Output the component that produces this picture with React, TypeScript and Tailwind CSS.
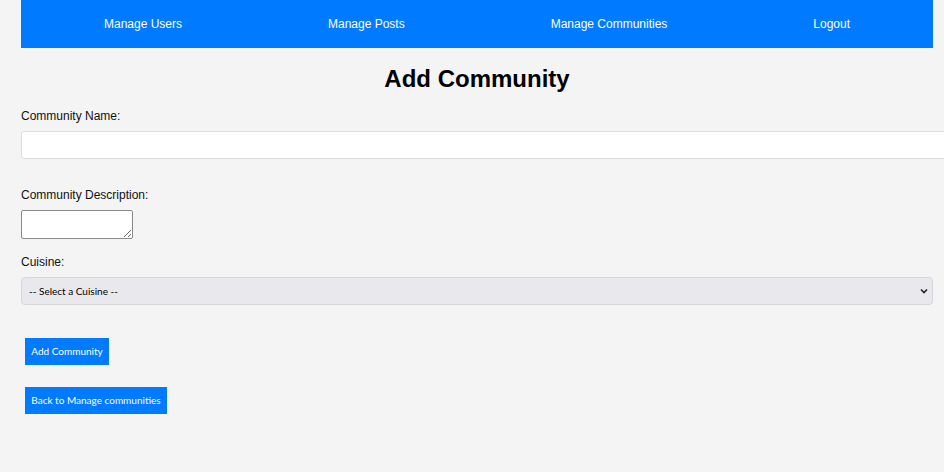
import { useState } from "react";

const navLinks = ["Manage Users", "Manage Posts", "Manage Communities", "Logout"];

export default function App() {
  const [name, setName] = useState("");
  const [description, setDescription] = useState("");
  const [cuisine, setCuisine] = useState("");

  return (
    <div className="min-h-[472px] w-[944px] overflow-hidden bg-[#f4f4f4] font-['Liberation_Sans',Arial,sans-serif] text-black">
      <div className="ml-[21px] w-[912px]">
        <nav className="flex h-[48px] items-center justify-around bg-[#007bff] px-[10px]">
          {navLinks.map((link) => (
            <a key={link} href="#" className="text-[12px] leading-[14px] text-white">
              {link}
            </a>
          ))}
        </nav>

        <h1 className="mt-[16px] text-center text-[24px] font-bold leading-[30px]">
          Add Community
        </h1>

        <form className="flex flex-col" onSubmit={(e) => e.preventDefault()}>
          <label htmlFor="communityName" className="mt-[15px] text-[12px] leading-[14px] text-[#111]">
            Community Name:
          </label>
          <input
            id="communityName"
            type="text"
            value={name}
            onChange={(e) => setName(e.target.value)}
            className="mt-[8px] h-[28px] w-[940px] rounded-[3px] border border-[#dcdcdc] bg-white px-2 text-[12px] outline-none"
          />

          <label htmlFor="communityDescription" className="mt-[29px] text-[12px] leading-[14px] text-[#111]">
            Community Description:
          </label>
          <textarea
            id="communityDescription"
            value={description}
            onChange={(e) => setDescription(e.target.value)}
            className="mt-[8px] h-[29px] w-[112px] rounded-[2px] border border-[#8a8a8a] bg-white text-[12px] outline-none"
          />

          <label htmlFor="cuisine" className="mt-[16px] text-[12px] leading-[14px] text-[#111]">
            Cuisine:
          </label>
          <div className="relative mt-[8px]">
            <select
              id="cuisine"
              value={cuisine}
              onChange={(e) => setCuisine(e.target.value)}
              className="h-[28px] w-full appearance-none rounded-[4px] border border-[#d6d6da] bg-[#e9e9ed] pl-[7px] font-['Lato',sans-serif] text-[10px] text-black outline-none"
            >
              <option value="">-- Select a Cuisine --</option>
              <option value="italian">Italian</option>
              <option value="mexican">Mexican</option>
              <option value="indian">Indian</option>
            </select>
            <svg
              className="pointer-events-none absolute right-[5px] top-[11px]"
              width="8"
              height="6"
              viewBox="0 0 8 6"
            >
              <path d="M1 1.5 L4 4.5 L7 1.5" fill="none" stroke="#222" strokeWidth="1.6" />
            </svg>
          </div>

          <button
            type="submit"
            className="ml-[4px] mt-[33px] h-[27px] w-[84px] bg-[#007bff] text-center font-['Lato',sans-serif] text-[10px] text-white"
          >
            Add Community
          </button>

          <button
            type="button"
            className="ml-[4px] mt-[22px] h-[27px] w-[142px] bg-[#007bff] text-center font-['Lato',sans-serif] text-[10px] text-white"
          >
            Back to Manage communities
          </button>
        </form>
      </div>
    </div>
  );
}
